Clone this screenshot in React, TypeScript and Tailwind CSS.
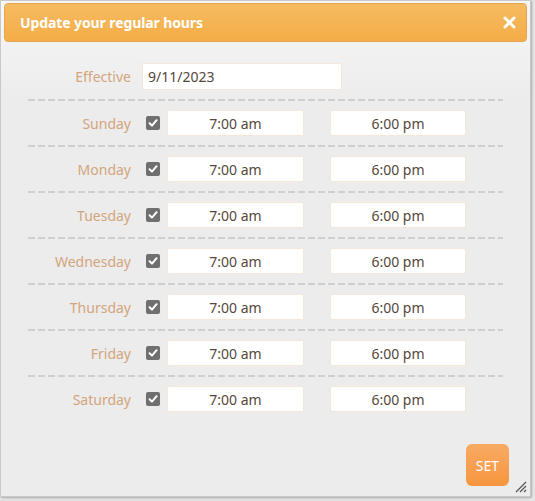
import React, { useState } from 'react';

const DAYS = ['Sunday', 'Monday', 'Tuesday', 'Wednesday', 'Thursday', 'Friday', 'Saturday'];

const Divider = () => (
  <div className="h-[2px] w-full bg-[repeating-linear-gradient(to_right,#cfcfcf_0_7px,transparent_7px_10px)]" />
);

const CheckBox = ({ checked, onToggle }: { checked: boolean; onToggle: () => void }) => (
  <button
    onClick={onToggle}
    className="w-[14px] h-[14px] rounded-[2px] bg-[#6f6f6f] flex items-center justify-center shrink-0"
  >
    {checked && (
      <svg width="10" height="10" viewBox="0 0 10 10">
        <path d="M1.6 5.2 L4 7.6 L8.6 2.2" stroke="#fff" strokeWidth="2" fill="none" strokeLinecap="round" strokeLinejoin="round" />
      </svg>
    )}
  </button>
);

export default function App() {
  const [checked, setChecked] = useState<boolean[]>(DAYS.map(() => true));

  return (
    <div className="w-[535px] h-[501px] bg-[#e4e4e4] font-['Noto_Sans',sans-serif]">
      <div className="relative w-[531px] h-[497px] border border-[#c9c9c9] rounded-br-[2px] bg-gradient-to-b from-[#f7f7f7] to-[#ececec] to-[20%] shadow-[1px_1px_2px_rgba(0,0,0,0.25)] flex flex-col">
        {/* Header */}
        <div className="mx-[3px] mt-[2px] h-[39px] rounded-[4px] border border-[#e7a352] bg-gradient-to-b from-[#f6bb60] to-[#f4ad47] flex items-center justify-between pl-[15px] pr-[10px]">
          <span className="text-white font-bold text-[14px] tracking-[-0.1px]">Update your regular hours</span>
          <svg width="13" height="13" viewBox="0 0 13 13">
            <path d="M2 2 L11 11 M11 2 L2 11" stroke="#fff" strokeWidth="3" strokeLinecap="round" />
          </svg>
        </div>

        {/* Body */}
        <div className="px-[27px] pt-[21px]">
          <div className="flex items-center">
            <div className="w-[103px] text-right text-[14px] text-[#d3a57c]">Effective</div>
            <div className="ml-[11px] w-[200px] h-[27px] bg-white border border-[#f5e7da] rounded-[2px] flex items-center px-[5px] text-[14px] text-[#56473a]">
              9/11/2023
            </div>
          </div>
          <div className="pt-[9px]">
            <Divider />
          </div>

          {DAYS.map((day, i) => (
            <div key={day}>
              <div className="flex items-center py-[9px]">
                <div className="w-[103px] text-right text-[14px] text-[#d3a57c]">{day}</div>
                <div className="ml-[15px]">
                  <CheckBox
                    checked={checked[i]}
                    onToggle={() => setChecked(checked.map((c, j) => (j === i ? !c : c)))}
                  />
                </div>
                <div className="ml-[7px] w-[137px] h-[26px] bg-white border border-[#f5e7da] rounded-[2px] flex items-center justify-center text-[14px] text-[#56473a]">
                  7:00 am
                </div>
                <div className="ml-[26px] w-[136px] h-[26px] bg-white border border-[#f5e7da] rounded-[2px] flex items-center justify-center text-[14px] text-[#56473a]">
                  6:00 pm
                </div>
              </div>
              {i < DAYS.length - 1 && <Divider />}
            </div>
          ))}
        </div>

        <div className="flex justify-end pr-[21px] mt-auto mb-[10px]">
          <button className="w-[43px] h-[42px] rounded-[6px] bg-gradient-to-b from-[#f8aa63] to-[#f6963e] text-white text-[14px]">
            SET
          </button>
        </div>

        {/* resize grip */}
        <svg className="absolute right-[3px] bottom-[3px]" width="13" height="13" viewBox="0 0 13 13">
          <path d="M12 2 L2 12 M12 6 L6 12 M12 10 L10 12" stroke="#555" strokeWidth="1.2" />
        </svg>
      </div>
    </div>
  );
}
